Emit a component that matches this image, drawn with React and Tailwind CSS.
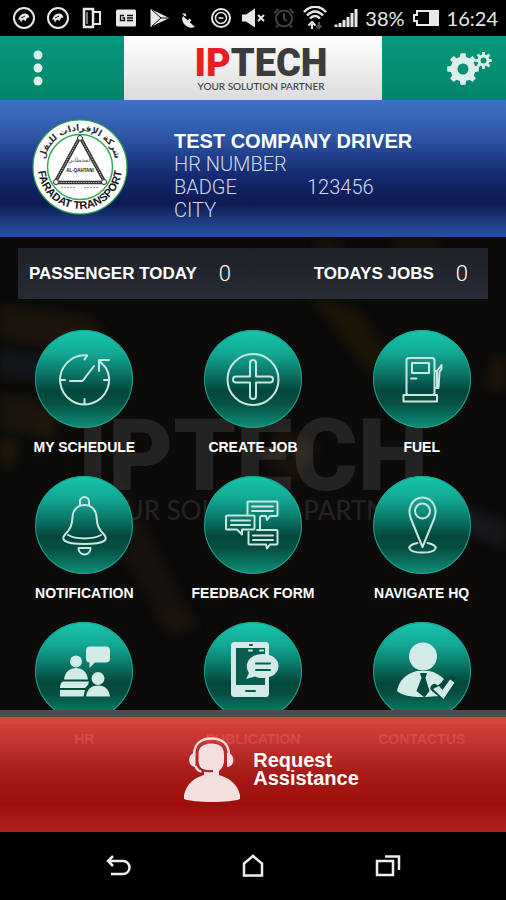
import React from 'react';

function gearPath(cx, cy, teeth, outer, inner, hole) {
  const step = (Math.PI * 2) / teeth;
  const at = (r, a) => `${(cx + r * Math.cos(a)).toFixed(2)} ${(cy + r * Math.sin(a)).toFixed(2)}`;
  const points = [];
  for (let i = 0; i < teeth; i += 1) {
    const a = i * step - Math.PI / 2;
    points.push(at(inner, a - step * 0.32), at(outer, a - step * 0.2), at(outer, a + step * 0.2), at(inner, a + step * 0.32));
  }
  return `M${points.join('L')}Z M${cx - hole} ${cy}a${hole} ${hole} 0 1 0 ${hole * 2} 0a${hole} ${hole} 0 1 0 ${-hole * 2} 0Z`;
}

function StatusIcon({ children, className = 'h-6 w-6', box = '0 0 24 24' }) {
  return (
    <svg viewBox={box} className={`shrink-0 ${className}`} fill="none" stroke="#e8e8e8" strokeWidth="2" aria-hidden="true">
      {children}
    </svg>
  );
}

function BirdIcon() {
  return (
    <StatusIcon>
      <circle cx="12" cy="12" r="10" />
      <path d="M6.500 14c0-3.500 3-6.500 6-6.500 3 0 4.500 1.500 5 4l-2.500.5-1.500 3-2.500-1.500-2 3-1-3z" fill="#e8e8e8" stroke="none" />
      <path d="M9 12l4-2" stroke="#222" strokeWidth="1" />
    </StatusIcon>
  );
}

function StatusBar() {
  return (
    <div className="flex h-9 items-center bg-black pr-2 pl-3 font-['Lato',sans-serif] text-xl text-[#e8e8e8]">
      <div className="flex items-center gap-2.5">
        <BirdIcon />
        <BirdIcon />
        <StatusIcon>
          <path d="M4 3h9v18H4z" strokeWidth="2.500" />
          <path d="M14 6h6v12h-6" />
          <path d="M7 6v12" strokeWidth="1" />
        </StatusIcon>
        <StatusIcon>
          <rect x="2" y="3.500" width="20" height="17" rx="1.500" fill="#e8e8e8" stroke="none" />
          <path d="M10 9.500H6.500v5h4v-2.500H8.500M13 9.500h6M13 12h6M13 14.500h6" stroke="#111" strokeWidth="1.300" />
        </StatusIcon>
        <StatusIcon>
          <path d="M2.500 3v18L21.500 12z" fill="#e8e8e8" stroke="none" />
          <path d="M4 4l9 8-9 8M12 12h9" stroke="#111" strokeWidth="1" />
        </StatusIcon>
        <StatusIcon className="h-6 w-[18px]" box="0 0 18 24">
          <path d="M1 10l6 5.500 6 5.500c-4 1.500-8 .5-10.500-2.500S-.5 12.500 1 10zM0 7.500h3.500l1 3-2-.5z" fill="#e8e8e8" stroke="none" />
          <path d="M5 17l3.500-3.500" strokeWidth="2.500" />
        </StatusIcon>
        <StatusIcon>
          <circle cx="11" cy="12" r="9" />
          <circle cx="11" cy="12" r="5.500" strokeWidth="1.500" />
          <path d="M8.500 12h5" strokeWidth="1.500" />
        </StatusIcon>
      </div>
      <div className="ml-auto flex items-center gap-[7px]">
        <StatusIcon>
          <path d="M1 8.500h4L14 2.500v19L5 15.500H1z" fill="#e8e8e8" stroke="none" />
          <path d="M17 9l6 6M23 9l-6 6" />
        </StatusIcon>
        <StatusIcon>
          <g stroke="#444">
            <circle cx="12" cy="12.500" r="8" />
            <path d="M12 7v6l3 2M2.500 7l4-4M21.500 7l-4-4M6 19l-2 2.500M18 19l2 2.500" />
          </g>
        </StatusIcon>
        <StatusIcon>
          <path d="M1 6c6-7 16-7 22 0M4 9.500c5-5.500 11-5.500 16 0M7 12.500c3-3.500 7-3.500 10 0" strokeWidth="2.500" />
          <path d="M9 23v-5M5.500 19.500L9 16l3.500 3.500" />
          <path d="M16 16v5M13.500 19.500L16 22l2.500-2.500" stroke="#555" />
        </StatusIcon>
        <StatusIcon>
          <path d="M2 21v-2.500M6 21v-4M10 21v-7M14 21V11M18 21V7M22 21V3" strokeWidth="3" />
        </StatusIcon>
        <span>38%</span>
        <StatusIcon className="h-6 w-7" box="0 0 28 24">
          <path d="M5 5h21v14H5v-4H2V9h3z" />
          <path d="M17 6h8v12h-8z" fill="#e8e8e8" stroke="none" />
        </StatusIcon>
        <time>16:24</time>
      </div>
    </div>
  );
}

function Header() {
  return (
    <header className="grid h-16 grid-cols-[1fr_258px_1fr] bg-linear-to-b from-[#06987c] to-[#04856b]">
      <button type="button" aria-label="Menu" className="flex items-center pl-[33px]">
        <svg viewBox="0 0 10 36" className="h-9 w-2.5" fill="#dcefeb">
          <circle cx="5" cy="5" r="4.500" />
          <circle cx="5" cy="18" r="4.500" />
          <circle cx="5" cy="31" r="4.500" />
        </svg>
      </button>
      <div className="flex flex-col items-center bg-linear-to-b from-white to-[#dcdcdc] pt-2.5 pl-4 font-['Lato',sans-serif] text-[#3c3c3e]">
        <div className="font-['Roboto',sans-serif] text-[38px] leading-[34px] font-black">
          <span className="text-[#ed1c24]">IP</span>TECH
        </div>
        <div className="text-[10px] leading-3 font-medium">YOUR SOLUTION PARTNER</div>
      </div>
      <button type="button" aria-label="Settings" className="flex items-center justify-end pr-3.5">
        <svg viewBox="0 0 46 34" className="h-[34px] w-[46px]" fill="#dcefeb" fillRule="evenodd">
          <path d={gearPath(17, 18, 8, 16, 12.5, 5.5)} />
          <path d={gearPath(37.5, 9.5, 8, 8.5, 6, 3)} />
        </svg>
      </button>
    </header>
  );
}

function CompanyBadge() {
  return (
    <svg viewBox="0 0 96 96" className="h-24 w-24 shrink-0" role="img" aria-label="Faradat Transport">
      <defs>
        <path id="badgeLower" d="M6 48a42 42 0 0 0 84 0" />
        <path id="badgeUpper" d="M17 66a36 36 0 1 1 62 0" />
      </defs>
      <circle cx="48" cy="48" r="47" fill="#fff" stroke="#2f9e4f" strokeWidth="1.200" />
      <circle cx="48" cy="48" r="32.500" fill="none" stroke="#35a853" strokeWidth="1.500" />
      <text fontFamily="Liberation Sans, sans-serif" fontWeight="700" fontSize="11" fill="#151515" textAnchor="middle">
        <textPath href="#badgeLower" startOffset="50%">FARADAT TRANSPORT</textPath>
      </text>
      <text fontFamily="DejaVu Sans, sans-serif" fontWeight="700" fontSize="9" fill="#333" textAnchor="middle">
        <textPath href="#badgeUpper" startOffset="50%">شركة الإفرادات للنقل</textPath>
      </text>
      <g fill="none" stroke="#333">
        <path d="M48 18L23 63.500h50z" strokeWidth="3.500" strokeLinejoin="round" />
        <path d="M48 18L23 63.500h50z" stroke="#bbb" strokeWidth="1" strokeDasharray="1.500 1" />
      </g>
      <g fill="#fff" stroke="#333">
        <circle cx="48" cy="19" r="2.500" />
        <circle cx="24" cy="63" r="2.500" />
        <circle cx="72" cy="63" r="2.500" />
      </g>
      <text x="48" y="43" fontFamily="DejaVu Sans, sans-serif" fontSize="6" fill="#555" textAnchor="middle">القحطاني</text>
      <text x="48" y="53" fontFamily="Liberation Sans, sans-serif" fontWeight="700" fontSize="4.500" fill="#111" textAnchor="middle">AL-QAHTANI</text>
      <path d="M29 68.500h15M52 68.500h14" stroke="#999" strokeDasharray="2 1" />
    </svg>
  );
}

function Profile() {
  return (
    <section className="flex h-[137px] bg-linear-[180deg,#3f72c4_0%,#2f58a8_25%,#152a72_55%,#0d1a52_76%,#1c3a80_88%,#27509c_100%] pl-8">
      <div className="pt-[19px]">
        <CompanyBadge />
      </div>
      <div className="pt-[30px] pl-[46px] text-xl leading-[23px] text-white">
        <h1 className="font-bold">TEST COMPANY DRIVER</h1>
        <dl className="grid grid-cols-[133px_auto] font-['Roboto',sans-serif] font-light text-[#d3d8e8]">
          <dt>HR NUMBER</dt>
          <dd />
          <dt>BADGE</dt>
          <dd>123456</dd>
          <dt>CITY</dt>
          <dd />
        </dl>
      </div>
    </section>
  );
}

const icons = {
  schedule: (
    <>
      <path d="M52 25.500A24.500 24.500 0 1 0 71 38L64.500 31" />
      <path d="M74 30H64v11M52 25.500l-2.500 4M35 51h12.500L59 36M25 50h5M69 50h5M49.500 69v5" />
    </>
  ),
  create: (
    <>
      <circle cx="49" cy="49.500" r="25.500" />
      <path d="M46 33a3 3 0 0 1 6 0v13.500h14a3 3 0 0 1 0 6H52V66a3 3 0 0 1-6 0V52.500H32a3 3 0 0 1 0-6h14z" />
    </>
  ),
  fuel: (
    <>
      <rect x="33.500" y="28" width="28" height="37" rx="2.500" />
      <rect x="30.500" y="65" width="33.500" height="6.500" />
      <rect x="39" y="33" width="17" height="10" />
      <path d="M38 48.500h5.500M62 41h2v17M62 58h3.500l1-16 2-3v-4l-4.500 6" />
    </>
  ),
  notification: (
    <>
      <path d="M45 28.500v-3a4.500 4.500 0 0 1 9 0v3" />
      <path d="M49.500 29c-7 0-11.500 5-12 12-.5 8-2 12-7 17-5 5-3 10 19 10s24-5 19-10c-5-5-6.500-9-7-17-.5-7-5-12-12-12z" />
      <path d="M33 59c8 4.500 25 4.500 33 0M43.500 72h12c0 8.500-12 8.500-12 0z" />
    </>
  ),
  feedback: (
    <>
      <path d="M43.500 38V26.500a1 1 0 0 1 1-1h28a1 1 0 0 1 1 1V39a1 1 0 0 1-1 1H66l-3 4-1-4h-5" />
      <path d="M23 39.500h26.500a1 1 0 0 1 1 1v12a1 1 0 0 1-1 1H38v5l-5-5H23a1 1 0 0 1-1-1v-12a1 1 0 0 1 1-1z" />
      <path d="M53 54h19.500a1 1 0 0 1 1 1v12.500a1 1 0 0 1-1 1H66l-3 4-1-4H45.500a1 1 0 0 1-1-1V56M56 41v12" />
      <path d="M48 30.500h21M48 35h21M27 44.500h19M27 49h19M49 59.500h20M49 64h20" />
    </>
  ),
  navigate: (
    <>
      <path d="M49.500 71L38 43c-4.500-11 2-21.500 11.500-21.500S65.500 32 61 43z" />
      <circle cx="49.500" cy="35" r="7.500" />
      <path d="M44.500 67c-12 2-11 9.500 5 9.500s17-7.500 5-9.500" />
    </>
  ),
  hr: (
    <g fill="#d3ebe6" stroke="none">
      <path d="M54 24.500h17a4 4 0 0 1 4 4v8a4 4 0 0 1-4 4H60l-5.500 5.500v-5.500a3.500 3.500 0 0 1-3.500-4v-8a4 4 0 0 1 3-4z" />
      <circle cx="41" cy="39.500" r="6" />
      <path d="M29 57.500c1-8 6-11.500 12-11.500s11 3.500 12 11.500zM25 66c0-3 1-6 3-6.500h26l-1 3.500-3 3zM25 68h25l-1.500 6.500H25z" />
      <circle cx="63" cy="56.500" r="6.500" />
      <path d="M51 74.500c1-8 6-11 12-11s11 3 12 11z" />
    </g>
  ),
  publication: (
    <g stroke="none">
      <rect x="27" y="20" width="38" height="55" rx="3.500" fill="#d3ebe6" />
      <path d="M32 26h29v37H32z" fill="#075e50" />
      <path d="M59 32c9 0 15.500 5 15.500 12S68 56 59 56c-3 0-6-.5-8-1.500L42 57l3-6c-6-9 1-19 14-19z" fill="#d3ebe6" />
      <path d="M52 41.500h14M52 48h14M42 69h9M46 23h2" stroke="#075e50" strokeWidth="2" />
      <path d="M45 28.500h3M56 28.500h3" stroke="#d3ebe6" />
    </g>
  ),
  contact: (
    <g stroke="none">
      <circle cx="50" cy="34.500" r="14" fill="#d3ebe6" />
      <path d="M44 49c-12 3-18 10-20 20 5 5 17 6.500 28 6l15-1-7-7 8-6 3-4c-4-4-9-7-15-8z" fill="#d3ebe6" />
      <path d="M47 51h7l-1.500 5 4 13-5 6.500L43.500 69l5-13z" fill="#054a3f" />
      <path d="M61.500 66l8 6.500 10-15" fill="none" stroke="#054a3f" strokeWidth="8" />
      <path d="M60 67l6-3 3.500 4 7.500-10.500 4.500 3L70.500 77z" fill="#d3ebe6" />
    </g>
  ),
};

const tiles = [
  ['schedule', 'MY SCHEDULE'],
  ['create', 'CREATE JOB'],
  ['fuel', 'FUEL'],
  ['notification', 'NOTIFICATION'],
  ['feedback', 'FEEDBACK FORM'],
  ['navigate', 'NAVIGATE HQ'],
  ['hr', 'HR'],
  ['publication', 'PUBLICATION'],
  ['contact', 'CONTACTUS'],
];

function Tile({ icon, label }) {
  return (
    <button type="button" className="flex flex-col items-center gap-2">
      <span className="block size-[98px] rounded-full bg-linear-[180deg,#18c6ae_0%,#12a792_24%,#0a7667_44%,#04463c_62%,#054f43_74%,#0f9078_100%] ring-1 ring-[#17a28b] ring-inset">
        <svg viewBox="0 0 98 98" className="size-full" fill="none" stroke="#c9e6e0" strokeWidth="2" strokeLinecap="round" strokeLinejoin="round" aria-hidden="true">
          {icons[icon]}
        </svg>
      </span>
      <span className="text-sm leading-[22px] font-bold whitespace-nowrap text-white">{label}</span>
    </button>
  );
}

function Backdrop() {
  return (
    <div className="absolute inset-0 overflow-hidden" aria-hidden="true">
      <svg viewBox="0 0 506 513" preserveAspectRatio="none" className="absolute inset-0 size-full blur-xs">
        <path d="M0 68l90 12 20 24-40 10-70-12z" fill="#1b150d" />
        <path d="M0 114l50 4 8 28-58-6z" fill="#14171a" />
        <path d="M0 158l36 2-4 38-32-6z" fill="#1a150f" />
        <path d="M34 168l24 0-4 34-22-4z" fill="#1e170a" />
        <path d="M0 200l18 4-4 26-14-4z" fill="#1e170b" />
        <path d="M310 60l50 14 28 44-18 18z" fill="#1b1506" />
        <path d="M390 0h40l16 12h-50zM316 0h20l20 60h-30z" fill="#161107" />
        <path d="M118 240l80 150-30 6-52-90z" fill="#16110c" />
        <path d="M420 250l86 36v24l-90-28z" fill="#16181b" />
        <path d="M280 190l40 20-26 36-30-24z" fill="#19120c" />
        <path d="M492 120h14v32h-20z" fill="#1b1509" />
        <path d="M152 374l30-6 14 20-22 10z" fill="#19130c" />
      </svg>
      <div className="absolute inset-x-0 top-[175px] text-center font-['Roboto',sans-serif] text-white/10">
        <div className="text-[100px] leading-[88px] font-black">IPTECH</div>
        <div className="font-['Lato',sans-serif] text-[26px] leading-5">YOUR SOLUTION PARTNER</div>
      </div>
    </div>
  );
}

function Stat({ label, value }) {
  return (
    <div className="flex items-center gap-[22px]">
      <dt className="text-[17px] font-bold">{label}</dt>
      <dd className="font-['Roboto',sans-serif] text-[22px] font-light">{value}</dd>
    </div>
  );
}

function Dashboard() {
  return (
    <main className="relative flex-1 bg-[#0c0b0a] pt-[11px]">
      <Backdrop />
      <dl className="relative mx-[18px] flex h-[51px] items-center justify-between bg-linear-to-b from-[#1d2229] to-[#272c34] pr-5 pl-[11px] text-white">
        <Stat label="PASSENGER TODAY" value="0" />
        <Stat label="TODAYS JOBS" value="0" />
      </dl>
      <div className="relative mt-[31px] grid grid-cols-3 gap-y-[18px]">
        {tiles.map(([icon, label]) => (
          <Tile key={icon} icon={icon} label={label} />
        ))}
      </div>
    </main>
  );
}

function AssistanceBar() {
  return (
    <div className="relative -mt-10">
      <div className="h-[7px] bg-[#4c4c4c]" />
      <button
        type="button"
        className="flex h-[115px] w-full items-center justify-center gap-3 bg-linear-[180deg,rgb(216_70_63)_0px,rgb(214_68_61)_6px,rgb(224_66_60/0.93)_7px,rgb(214_60_54/0.93)_20px,rgb(175_28_24/0.95)_50%,rgb(158_14_11)_76%,rgb(178_34_29)_100%] pb-3 pl-9 text-left text-xl leading-[18px] font-bold text-white"
      >
        <svg viewBox="0 0 58 66" className="h-[66px] w-[58px]" fill="#f3dfde" aria-hidden="true">
          <path d="M15.500 18c0-7 5-10.500 13-10.500S41 11 41 18v7c0 5-3 8-5 10v4c10 3 18 8 21 20v4c-8 4-47 4-56 0v-4c3-12 10-17 20-20v-4c-4-3-5.500-7-5.500-10z" />
          <path d="M11 19C11 8 18 2.500 28.500 2.500S46 8 46 19M12.500 30c1 3 3 5 6 5.500" fill="none" stroke="#f3dfde" strokeWidth="2.500" />
          <path d="M12.500 17v14C4 31 4 17 12.500 17zM44 17v14c8.500 0 8.500-14 0-14z" />
          <path d="M17 32.500c3 2.500 7 3 13 2.500" fill="none" stroke="#a8201b" strokeWidth="2" />
        </svg>
        <span>
          Request
          <br />
          Assistance
        </span>
      </button>
    </div>
  );
}

function SystemNav() {
  return (
    <nav className="grid h-[68px] grid-cols-3 items-center justify-items-center bg-black px-[51px]">
      <button type="button" aria-label="Back">
        <svg viewBox="0 0 28 28" className="size-7" fill="none" stroke="#eee" strokeWidth="2.500">
          <path d="M9 4L4 9l5 5M4 9h15a6 6 0 0 1 0 13H7" />
        </svg>
      </button>
      <button type="button" aria-label="Home">
        <svg viewBox="0 0 28 28" className="size-7" fill="none" stroke="#eee" strokeWidth="2.500">
          <path d="M5 23.500V11.500L14 4l9 7.500v12z" />
        </svg>
      </button>
      <button type="button" aria-label="Recent apps">
        <svg viewBox="0 0 28 28" className="size-7" fill="none" stroke="#eee" strokeWidth="2.500">
          <path d="M3 9h16v14H3zM11 4.500h14V18" />
        </svg>
      </button>
    </nav>
  );
}

export default function App() {
  return (
    <div className="flex min-h-screen flex-col bg-black font-['Liberation_Sans',Arial,sans-serif]">
      <StatusBar />
      <Header />
      <Profile />
      <Dashboard />
      <AssistanceBar />
      <SystemNav />
    </div>
  );
}
